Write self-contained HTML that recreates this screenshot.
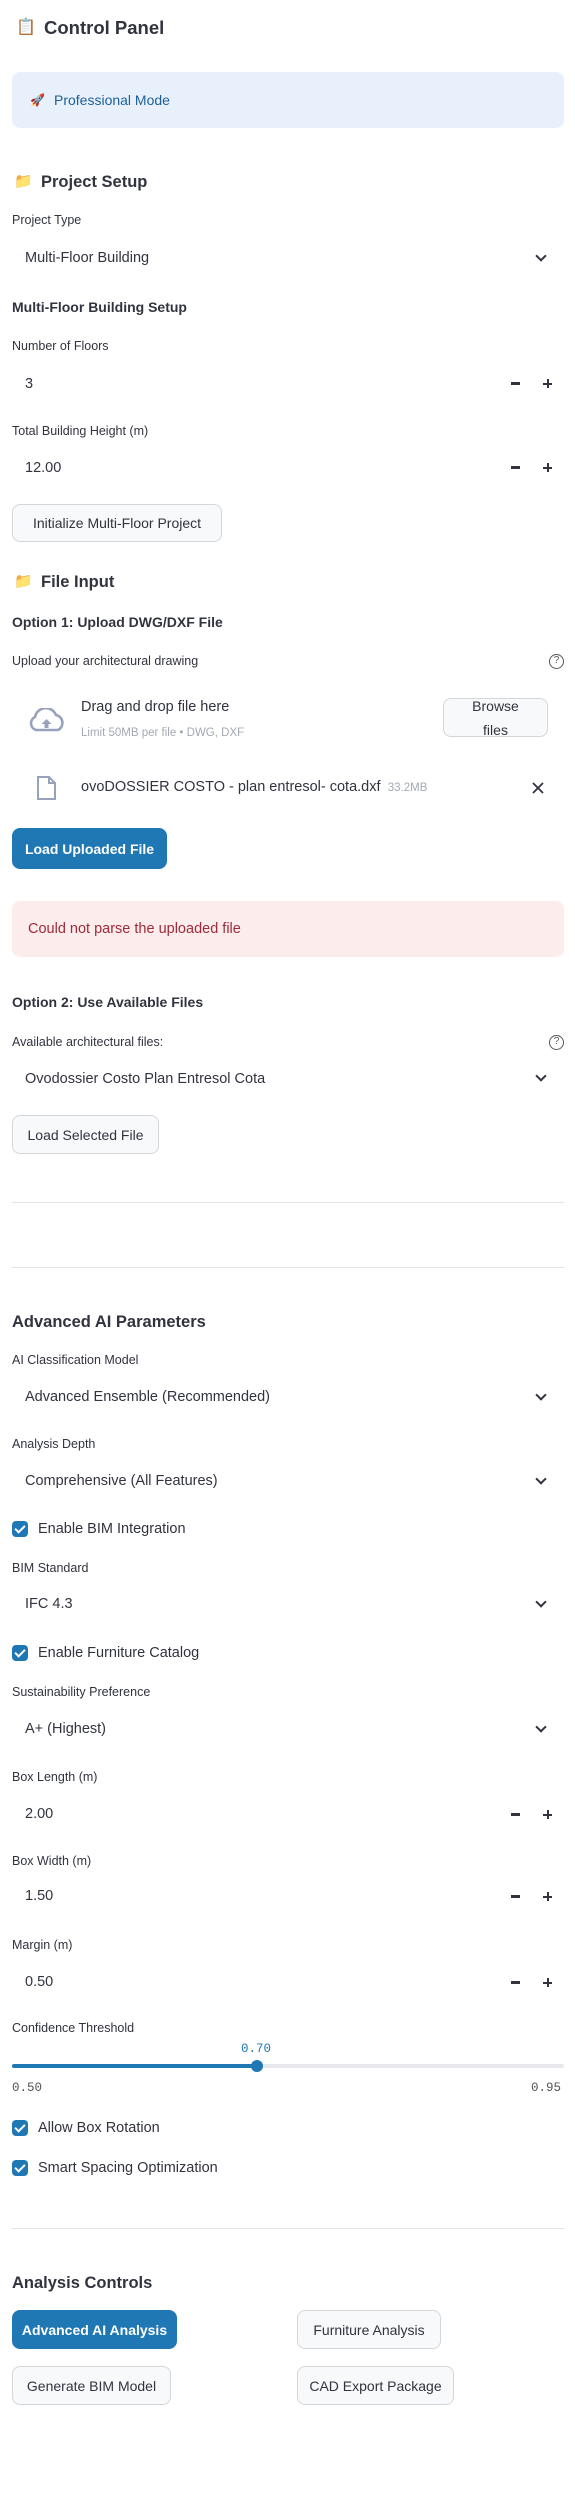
<!DOCTYPE html>
<html><head><meta charset="utf-8"><style>
*{margin:0;padding:0;box-sizing:border-box}
body{width:575px;height:2502px;background:#fff;position:relative;font-family:"Liberation Sans",sans-serif;color:#31333F;overflow:hidden}
.t{position:absolute;line-height:20px;white-space:nowrap}
.lab{font-size:12.5px;left:12px}
.val{font-size:14.5px;left:25px}
.h{font-size:16.5px;font-weight:bold;left:12px}
.sub{font-size:14px;font-weight:bold;left:12px}
.chev{position:absolute;left:537px;width:8px;height:8px;border-right:2px solid #31333F;border-bottom:2px solid #31333F;transform:rotate(45deg)}
.mi{position:absolute;left:511px;width:9px;height:2.5px;background:#31333F}
.pl{position:absolute;left:543px;width:9px;height:9px}
.pl:before{content:"";position:absolute;left:0;top:3.5px;width:9px;height:2.5px;background:#31333F}
.pl:after{content:"";position:absolute;left:3.5px;top:0;width:2.5px;height:9px;background:#31333F}
.btn{position:absolute;border:1px solid #d5d6da;border-radius:8px;background:#f8f9fb;font-size:14px;display:flex;align-items:center;justify-content:center;white-space:nowrap}
.pri{background:#1f77b4;border-color:#1f77b4;color:#fff;font-weight:bold}
.hr{position:absolute;left:12px;width:552px;height:1px;background:#e3e4e7}
.cb{position:absolute;left:12px;width:16px;height:16px;border-radius:4px;background:#1f77b4}
.cb:after{content:"";position:absolute;left:5px;top:2px;width:4px;height:8px;border-right:2px solid #fff;border-bottom:2px solid #fff;transform:rotate(45deg)}
.q{position:absolute;left:549px;width:15px;height:15px;border:1.3px solid #555;border-radius:50%;font-size:10px;line-height:12px;text-align:center;color:#555}
.mono{font-family:"Liberation Mono",monospace;font-size:12.5px}
</style></head><body>

<div class="t" style="left:16px;top:18px;font-size:16px">📋</div>
<div class="t" style="left:44px;top:18px;font-size:18.5px;font-weight:bold">Control Panel</div>

<div style="position:absolute;left:12px;top:72px;width:552px;height:56px;background:#e8f1fb;border-radius:8px"></div>
<div class="t" style="left:30px;top:90px;font-size:12px">🚀</div>
<div class="t" style="left:54px;top:90px;font-size:14px;color:#1d5f98">Professional Mode</div>

<div class="t" style="left:14px;top:172px;font-size:15px">📁</div>
<div class="t h" style="left:41px;top:172px">Project Setup</div>
<div class="t lab" style="top:210px">Project Type</div>
<div class="t val" style="top:248px">Multi-Floor Building</div><div class="chev" style="top:252px"></div>
<div class="t sub" style="top:297px">Multi-Floor Building Setup</div>
<div class="t lab" style="top:336px">Number of Floors</div>
<div class="t val" style="top:374px">3</div><div class="mi" style="top:382px"></div><div class="pl" style="top:379px"></div>
<div class="t lab" style="top:421px">Total Building Height (m)</div>
<div class="t val" style="top:458px">12.00</div><div class="mi" style="top:466px"></div><div class="pl" style="top:463px"></div>
<div class="btn" style="left:12px;top:504px;width:210px;height:38px">Initialize Multi-Floor Project</div>

<div class="t" style="left:14px;top:572px;font-size:15px">📁</div>
<div class="t h" style="left:41px;top:572px">File Input</div>
<div class="t sub" style="top:612px">Option 1: Upload DWG/DXF File</div>
<div class="t lab" style="top:651px">Upload your architectural drawing</div><div class="q" style="top:654px">?</div>
<svg style="position:absolute;left:27px;top:708px" width="40" height="24" viewBox="0 0 40 24"><path d="M9 22 A7 7 0 0 1 8 9 A11 11 0 0 1 29 7 A8 8 0 0 1 31 22 Z" fill="none" stroke="#98a2bd" stroke-width="2.6"/><path d="M19.5 11 l-5 5 h3 v4 h4 v-4 h3 z" fill="#98a2bd"/></svg>
<div class="t" style="left:81px;top:697px;font-size:14.5px">Drag and drop file here</div>
<div class="t" style="left:81px;top:723px;font-size:11.5px;color:#a3a8b4">Limit 50MB per file • DWG, DXF</div>
<div class="btn" style="left:443px;top:698px;width:105px;height:39px;line-height:24px;font-size:14px;flex-direction:column"><span>Browse</span><span>files</span></div>
<svg style="position:absolute;left:36px;top:776px" width="22" height="24" viewBox="0 0 22 24"><path d="M2 1 H13 L19 7 V23 H2 Z M13 1 V7 H19" fill="none" stroke="#98a2bd" stroke-width="2"/></svg>
<div class="t" style="left:81px;top:777px;font-size:14.5px">ovoDOSSIER COSTO - plan entresol- cota.dxf <span style="font-size:11.5px;color:#a3a8b4">&nbsp;33.2MB</span></div>
<svg style="position:absolute;left:532px;top:782px" width="12" height="12"><path d="M1 1 L11 11 M11 1 L1 11" stroke="#31333F" stroke-width="1.8"/></svg>
<div class="btn pri" style="left:12px;top:828px;width:155px;height:41px">Load Uploaded File</div>
<div style="position:absolute;left:12px;top:901px;width:552px;height:56px;background:#fdecec;border-radius:8px"></div>
<div class="t" style="left:28px;top:919px;font-size:14.5px;color:#9d2b3b">Could not parse the uploaded file</div>
<div class="t sub" style="top:992px">Option 2: Use Available Files</div>
<div class="t lab" style="top:1032px">Available architectural files:</div><div class="q" style="top:1035px">?</div>
<div class="t val" style="top:1069px">Ovodossier Costo Plan Entresol Cota</div><div class="chev" style="top:1072px"></div>
<div class="btn" style="left:12px;top:1115px;width:147px;height:39px">Load Selected File</div>
<div class="hr" style="top:1202px"></div>
<div class="hr" style="top:1267px"></div>

<div class="t h" style="top:1312px">Advanced AI Parameters</div>
<div class="t lab" style="top:1350px">AI Classification Model</div>
<div class="t val" style="top:1387px">Advanced Ensemble (Recommended)</div><div class="chev" style="top:1391px"></div>
<div class="t lab" style="top:1434px">Analysis Depth</div>
<div class="t val" style="top:1471px">Comprehensive (All Features)</div><div class="chev" style="top:1475px"></div>
<div class="cb" style="top:1521px"></div><div class="t val" style="left:38px;top:1519px">Enable BIM Integration</div>
<div class="t lab" style="top:1558px">BIM Standard</div>
<div class="t val" style="top:1594px">IFC 4.3</div><div class="chev" style="top:1598px"></div>
<div class="cb" style="top:1645px"></div><div class="t val" style="left:38px;top:1643px">Enable Furniture Catalog</div>
<div class="t lab" style="top:1682px">Sustainability Preference</div>
<div class="t val" style="top:1719px">A+ (Highest)</div><div class="chev" style="top:1723px"></div>
<div class="t lab" style="top:1767px">Box Length (m)</div>
<div class="t val" style="top:1804px">2.00</div><div class="mi" style="top:1813px"></div><div class="pl" style="top:1810px"></div>
<div class="t lab" style="top:1851px">Box Width (m)</div>
<div class="t val" style="top:1886px">1.50</div><div class="mi" style="top:1895px"></div><div class="pl" style="top:1892px"></div>
<div class="t lab" style="top:1935px">Margin (m)</div>
<div class="t val" style="top:1972px">0.50</div><div class="mi" style="top:1981px"></div><div class="pl" style="top:1978px"></div>
<div class="t lab" style="top:2018px">Confidence Threshold</div>
<div class="t mono" style="left:241px;top:2039px;color:#1f77b4">0.70</div>
<div style="position:absolute;left:12px;top:2064px;width:552px;height:4px;background:#e6e8ee;border-radius:2px"></div>
<div style="position:absolute;left:12px;top:2064px;width:245px;height:4px;background:#1f77b4;border-radius:2px"></div>
<div style="position:absolute;left:251px;top:2060px;width:12px;height:12px;background:#1f77b4;border-radius:50%"></div>
<div class="t mono" style="left:12px;top:2078px;color:#555">0.50</div>
<div class="t mono" style="left:531px;top:2078px;color:#555">0.95</div>
<div class="cb" style="top:2120px"></div><div class="t val" style="left:38px;top:2118px">Allow Box Rotation</div>
<div class="cb" style="top:2160px"></div><div class="t val" style="left:38px;top:2158px">Smart Spacing Optimization</div>
<div class="hr" style="top:2228px"></div>

<div class="t h" style="top:2273px">Analysis Controls</div>
<div class="btn pri" style="left:12px;top:2310px;width:165px;height:39px">Advanced AI Analysis</div>
<div class="btn" style="left:297px;top:2310px;width:144px;height:39px">Furniture Analysis</div>
<div class="btn" style="left:12px;top:2366px;width:159px;height:39px">Generate BIM Model</div>
<div class="btn" style="left:297px;top:2366px;width:157px;height:39px">CAD Export Package</div>
</body></html>
